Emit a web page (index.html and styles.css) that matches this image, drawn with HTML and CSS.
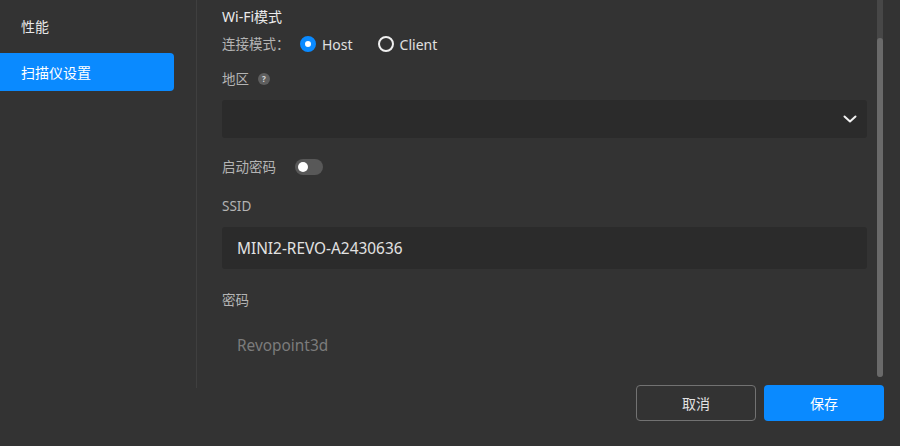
FILE: index.html
```html
<!DOCTYPE html>
<html lang="zh-CN">
  <head>
    <meta charset="UTF-8" />
    <meta name="viewport" content="width=device-width, initial-scale=1.0" />
    <title>扫描仪设置</title>
    <link rel="stylesheet" href="styles.css">
  </head>
  <body>
    <div class="window">
      <div class="main">
        <nav class="sidebar">
          <a class="nav-item">性能</a>
          <a class="nav-item active">扫描仪设置</a>
        </nav>

        <div class="panel">
          <form class="form">
            <div class="section-title">Wi-Fi模式</div>

            <div class="radio-row">
              <span class="field-label">连接模式：</span>
              <label class="radio checked"><span class="radio-dot"></span>Host</label>
              <label class="radio"><span class="radio-dot"></span>Client</label>
            </div>

            <div class="field-label region-label">
              地区
              <span class="help" aria-hidden="true">?</span>
            </div>
            <div class="select">
              <span class="select-value"></span>
              <svg class="chevron" width="14" height="8" viewBox="0 0 14 8" aria-hidden="true">
                <path d="M1.5 1.5 L7 6.5 L12.5 1.5" fill="none" stroke="#f2f2f2" stroke-width="2" stroke-linecap="round" stroke-linejoin="round" />
              </svg>
            </div>

            <div class="toggle-row">
              <span class="field-label">启动密码</span>
              <span class="switch"><span class="knob"></span></span>
            </div>

            <div class="field-label ssid-label">SSID</div>
            <div class="input">MINI2-REVO-A2430636</div>

            <div class="field-label pwd-label">密码</div>
            <div class="input disabled">Revopoint3d</div>
          </form>

          <div class="scrollbar">
            <div class="scroll-thumb"></div>
          </div>
        </div>
      </div>

      <div class="footer">
        <button type="button" class="btn btn-cancel">取消</button>
        <button type="button" class="btn btn-primary">保存</button>
      </div>
    </div>
  </body>
</html>
```

FILE: styles.css
```css
* {
  box-sizing: border-box;
}

html,
body {
  margin: 0;
  height: 100%;
  background: #333333;
}

body {
  font-family: "Noto Sans", "Noto Sans CJK SC", sans-serif;
  color: #e6e6e6;
}

.window {
  width: 900px;
  height: 446px;
  display: flex;
  flex-direction: column;
  background: #333333;
  overflow: hidden;
}

.main {
  display: flex;
  height: 388px;
}

/* left navigation */
.sidebar {
  width: 197px;
  flex-shrink: 0;
  border-right: 1px solid #3f3f3f;
  padding-top: 7px;
  display: flex;
  flex-direction: column;
  gap: 8px;
}

.nav-item {
  width: 174px;
  height: 38px;
  display: flex;
  align-items: center;
  padding-left: 21px;
  font-size: 14px;
  color: #e8e8e8;
  border-radius: 0 4px 4px 0;
}

.nav-item.active {
  background: #0a8aff;
  color: #ffffff;
}

/* settings panel */
.panel {
  flex: 1;
  display: flex;
  align-items: flex-start;
}

.form {
  flex: 1;
  margin: 0;
  padding: 7px 10px 0 25px;
}

.section-title {
  font-size: 14px;
  line-height: 20px;
  color: #ebebeb;
}

.field-label {
  font-size: 13.5px;
  line-height: 20px;
  color: #b4b4b4;
}

.radio-row {
  display: flex;
  align-items: center;
  height: 24px;
  margin-top: 5px;
}

.radio-row .field-label {
  width: 78px;
}

.radio {
  display: flex;
  align-items: center;
  gap: 6px;
  font-size: 14px;
  color: #e0e0e0;
  margin-right: 25px;
}

.radio-dot {
  width: 16px;
  height: 16px;
  border-radius: 50%;
  border: 2px solid #f0f0f0;
}

.radio.checked .radio-dot {
  border: 5px solid #0a8aff;
  background: #ffffff;
}

.region-label {
  display: flex;
  align-items: center;
  gap: 9px;
  margin-top: 13px;
}

.help {
  width: 12px;
  height: 12px;
  border-radius: 50%;
  background: #5e5e5e;
  color: #d8d8d8;
  font-size: 8px;
  font-weight: 700;
  line-height: 12px;
  text-align: center;
}

.select {
  height: 38px;
  margin-top: 11px;
  background: #2b2b2b;
  border-radius: 3px;
  display: flex;
  align-items: center;
  justify-content: space-between;
  padding: 0 10px 0 14px;
}

.toggle-row {
  display: flex;
  align-items: center;
  gap: 19px;
  height: 20px;
  margin-top: 19px;
}

.switch {
  width: 28px;
  height: 16px;
  border-radius: 8px;
  background: #585858;
  display: flex;
  align-items: center;
  padding-left: 3px;
}

.knob {
  width: 10px;
  height: 10px;
  border-radius: 50%;
  background: #ffffff;
}

.ssid-label {
  margin-top: 19px;
}

.input {
  height: 42px;
  margin-top: 11px;
  background: #2b2b2b;
  border-radius: 3px;
  display: flex;
  align-items: center;
  padding-left: 15px;
  font-size: 15.4px;
  color: #e2e2e2;
}

.input.disabled {
  background: transparent;
  color: #7c7c7c;
}

.pwd-label {
  margin-top: 21px;
}

.pwd-label + .input {
  margin-top: 14px;
}

/* custom scroll bar */
.scrollbar {
  width: 6px;
  height: 377px;
  margin-right: 17px;
  background: #474747;
  border-radius: 0 0 3px 3px;
  padding-top: 38px;
}

.scroll-thumb {
  height: 100%;
  background: #6a6a6a;
  border-radius: 3px;
}

/* dialog actions */
.footer {
  display: flex;
  justify-content: flex-end;
  gap: 8px;
  margin-top: -3px;
  padding-right: 16px;
}

.btn {
  width: 120px;
  height: 36px;
  border-radius: 4px;
  font-family: inherit;
  font-size: 14px;
  cursor: pointer;
}

.btn-cancel {
  background: transparent;
  border: 1px solid #727272;
  color: #e2e2e2;
}

.btn-primary {
  background: #0a8aff;
  border: none;
  color: #ffffff;
}
```
